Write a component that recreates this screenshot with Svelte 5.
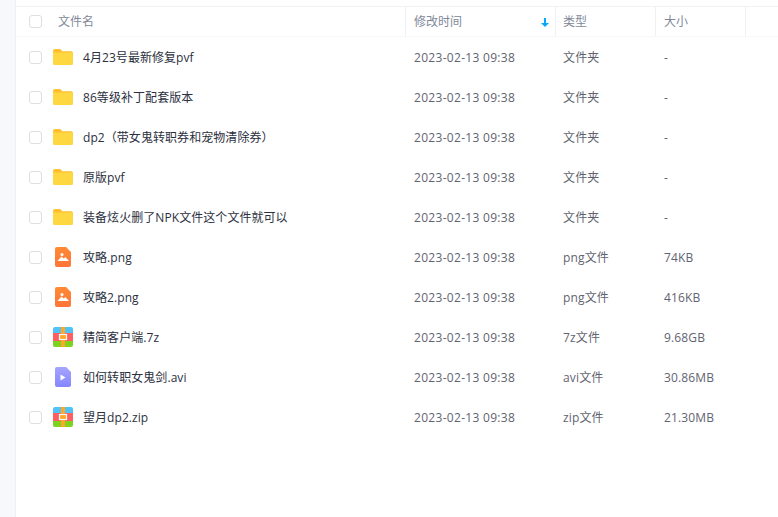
<script>
  const rows = [
    { name: '4月23号最新修复pvf', type: '文件夹', size: '-', icon: 'folder' },
    { name: '86等级补丁配套版本', type: '文件夹', size: '-', icon: 'folder' },
    { name: 'dp2（带女鬼转职券和宠物清除券）', type: '文件夹', size: '-', icon: 'folder' },
    { name: '原版pvf', type: '文件夹', size: '-', icon: 'folder' },
    { name: '装备炫火删了NPK文件这个文件就可以', type: '文件夹', size: '-', icon: 'folder' },
    { name: '攻略.png', type: 'png文件', size: '74KB', icon: 'image' },
    { name: '攻略2.png', type: 'png文件', size: '416KB', icon: 'image' },
    { name: '精简客户端.7z', type: '7z文件', size: '9.68GB', icon: 'zip' },
    { name: '如何转职女鬼剑.avi', type: 'avi文件', size: '30.86MB', icon: 'video' },
    { name: '望月dp2.zip', type: 'zip文件', size: '21.30MB', icon: 'zip' }
  ];
</script>

<div class="page">
  <aside class="rail"></aside>
  <main class="list">
    <div class="topgap"></div>
    <div class="row head">
      <div class="check"><span class="box"></span></div>
      <div class="cell name headname">文件名</div>
      <div class="cell time sep">修改时间
        <svg class="sort" width="8" height="9" viewBox="0 0 8 9"><path d="M3 0h2v5h3L4 9 0 5h3z" fill="#06a7ff"/></svg>
      </div>
      <div class="cell type sep">类型</div>
      <div class="cell size sep">大小</div>
      <div class="cell rest sep"></div>
    </div>
    {#each rows as r}
      <div class="row item">
        <div class="check"><span class="box"></span></div>
        <div class="cell name">
          <span class="icon">
            {#if r.icon === 'folder'}
              <svg class="folder" width="20" height="16" viewBox="0 0 20 16">
                <path d="M0 2a2 2 0 0 1 2-2h4.5a2 2 0 0 1 1.5.7L9.5 2.2H18a2 2 0 0 1 2 2V14a2 2 0 0 1-2 2H2a2 2 0 0 1-2-2z" fill="#ffc02e"/>
                <path d="M0 3.5h18a2 2 0 0 1 2 2V14a2 2 0 0 1-2 2H2a2 2 0 0 1-2-2z" fill="#ffd740"/>
              </svg>
            {:else if r.icon === 'image'}
              <svg width="16" height="20" viewBox="0 0 16 20">
                <defs><linearGradient id="ig" x1="0" y1="0" x2="0" y2="1"><stop offset="0" stop-color="#ff8a33"/><stop offset="1" stop-color="#ff7438"/></linearGradient></defs>
                <path d="M2 0h9l5 5v13a2 2 0 0 1-2 2H2a2 2 0 0 1-2-2V2a2 2 0 0 1 2-2z" fill="url(#ig)"/>
                <circle cx="7" cy="7.4" r="1.5" fill="#fff"/>
                <path d="M2.4 14 6.6 9.4 8.8 11.4 10.2 10 14 14z" fill="#fff"/>
              </svg>
            {:else if r.icon === 'video'}
              <svg width="16" height="20" viewBox="0 0 16 20">
                <defs><linearGradient id="vg" x1="0" y1="0" x2="0" y2="1"><stop offset="0" stop-color="#a5a5ff"/><stop offset="1" stop-color="#8585ff"/></linearGradient></defs>
                <path d="M2 0h9l5 5v13a2 2 0 0 1-2 2H2a2 2 0 0 1-2-2V2a2 2 0 0 1 2-2z" fill="url(#vg)"/>
                <path d="M5.5 7.5v6l5-3z" fill="#fff"/>
              </svg>
            {:else}
              <svg width="20" height="20" viewBox="0 0 20 20">
                <path d="M2 0h16a2 2 0 0 1 2 2v4H0V2a2 2 0 0 1 2-2z" fill="#4fc3f7"/>
                <rect y="6" width="20" height="8" fill="#ff5f5f"/>
                <path d="M0 14h20v4a2 2 0 0 1-2 2H2a2 2 0 0 1-2-2z" fill="#7ed321"/>
                <rect x="8" width="4" height="20" fill="#ffa726"/>
                <rect x="6.5" y="7.5" width="7" height="5" fill="#ffa726" stroke="#fff" stroke-width="1.2"/>
              </svg>
            {/if}
          </span>
          <span class="filename">{r.name}</span>
        </div>
        <div class="cell time">2023-02-13 09:38</div>
        <div class="cell type">{r.type}</div>
        <div class="cell size">{r.size}</div>
        <div class="cell rest"></div>
      </div>
    {/each}
  </main>
</div>

<style>
  :global(body) {
    margin: 0;
    background: #fff;
    font-family: "Open Sans", "Noto Sans CJK SC", sans-serif;
  }
  .page {
    display: flex;
    height: 517px;
    width: 778px;
    overflow: hidden;
  }
  .rail {
    width: 15px;
    flex: none;
    background: #f7f8fb;
    border-right: 1px solid #f0f0f4;
  }
  .list {
    flex: 1;
    min-width: 0;
  }
  .topgap {
    height: 6px;
    border-bottom: 1px solid #f0f0f4;
  }
  .row {
    display: flex;
    align-items: stretch;
    font-size: 12px;
  }
  .head {
    height: 29px;
    line-height: 29px;
    color: #818999;
    border-bottom: 1px solid #f7f7f9;
  }
  .item {
    height: 40px;
    line-height: 42px;
    color: #5f6470;
  }
  .check {
    width: 42px;
    flex: none;
    display: flex;
    align-items: center;
    padding-left: 13px;
    box-sizing: border-box;
  }
  .box {
    width: 13px;
    height: 13px;
    box-sizing: border-box;
    border: 1px solid #dcdfe3;
    border-radius: 3px;
    background: #fff;
  }
  .item .box {
    margin-top: 1px;
  }
  .cell {
    box-sizing: border-box;
    white-space: nowrap;
  }
  .name {
    width: 347px;
    flex: none;
    display: flex;
    align-items: center;
  }
  .headname {
    color: #818999;
  }
  .icon {
    width: 20px;
    height: 20px;
    flex: none;
    display: flex;
    align-items: center;
    justify-content: center;
    margin-left: -5px;
    margin-right: 10px;
  }
  .folder {
    margin-top: -1px;
  }
  .filename {
    color: #2b2f3e;
    letter-spacing: 0.06px;
    margin-top: 2px;
    line-height: 20px;
  }
  .time {
    width: 150px;
    flex: none;
    padding-left: 9px;
    position: relative;
    letter-spacing: 0.3px;
  }
  .type {
    width: 100px;
    flex: none;
    padding-left: 8px;
    letter-spacing: 0.15px;
  }
  .size {
    width: 90px;
    flex: none;
    padding-left: 9px;
    letter-spacing: 0.15px;
  }
  .rest {
    flex: 1;
  }
  .sep {
    border-left: 1px solid #f0f0f4;
  }
  .time.sep {
    padding-left: 8px;
    letter-spacing: 0;
  }
  .type.sep {
    padding-left: 7px;
    letter-spacing: 0;
  }
  .size.sep {
    padding-left: 8px;
    letter-spacing: 0;
  }
  .sort {
    position: absolute;
    right: 6px;
    top: 11px;
  }
</style>
